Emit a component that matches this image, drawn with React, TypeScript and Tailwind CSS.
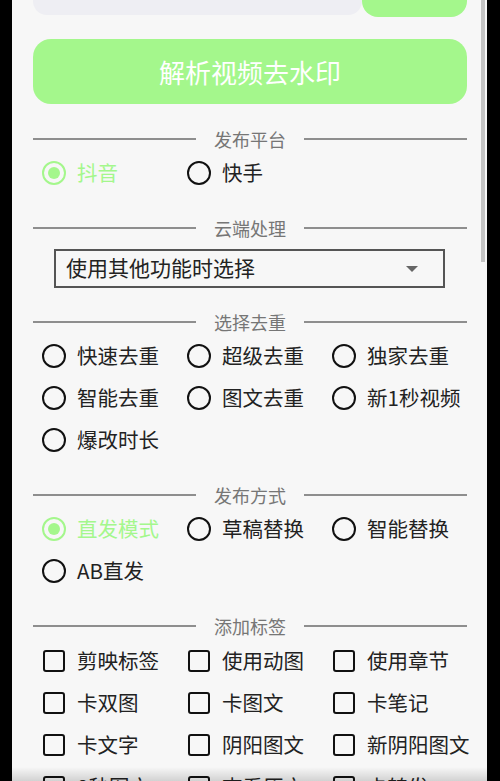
const font = { fontFamily: '"Noto Sans CJK SC", "Noto Sans", sans-serif' };

const Divider = ({ title }: { title: string }) => (
  <div className="h-[24px] flex items-center gap-[18px]">
    <div className="flex-1 h-[2px] bg-[#8e8e8e]" />
    <span className="text-[18px] leading-none text-[#767676]">{title}</span>
    <div className="flex-1 h-[2px] bg-[#8e8e8e]" />
  </div>
);

const Radio = ({ label, on }: { label: string; on?: boolean }) => (
  <div className="h-[42px] flex items-center gap-[11px]">
    {on ? (
      <div className="w-[24px] h-[24px] rounded-full border-[2.5px] border-[#a4f78c] flex items-center justify-center">
        <div className="w-[12px] h-[12px] rounded-full bg-[#a4f78c]" />
      </div>
    ) : (
      <div className="w-[24px] h-[24px] rounded-full border-[2.5px] border-[#111]" />
    )}
    <span className={"text-[20.5px] leading-none -mt-[2px] " + (on ? "text-[#a4f78c]" : "text-[#222]")}>{label}</span>
  </div>
);

const Check = ({ label }: { label: string }) => (
  <div className="h-[42px] flex items-center gap-[12px] pl-[1px]">
    <div className="w-[22px] h-[22px] rounded-[3px] border-[2.5px] border-[#111]" />
    <span className="text-[20.5px] leading-none -mt-[2px] text-[#222]">{label}</span>
  </div>
);

const cols = "grid grid-cols-[145px_145px_145px] pl-[9px]";

export default function App() {
  return (
    <div className="w-[500px] h-[781px] bg-black overflow-hidden" style={font}>
      <div className="relative ml-[12px] w-[475px] h-[781px] bg-[#f7f7f7] overflow-hidden">
        {/* scrollbar thumb */}
        <div className="absolute right-[2px] top-0 w-[4px] h-[262px] bg-[#c4c4c4]" />
        {/* bottom shadow */}
        <div className="absolute left-0 right-0 bottom-0 h-[14px] bg-gradient-to-b from-transparent to-black/15" />

        <div className="pl-[21px] pr-[20px]">
          <div className="h-[17px] flex items-end overflow-hidden">
            <div className="flex-1 h-[50px] mb-[2px] rounded-[14px] bg-[#eeeef3]" />
            <div className="w-[105px] h-[50px] rounded-[16px] bg-[#a4f78c]" />
          </div>

          <button className="mt-[22px] w-full h-[65px] rounded-[18px] bg-[#a4f78c] text-white text-[26px] flex items-center justify-center">
            解析视频去水印
          </button>

          <div className="mt-[23px]">
            <Divider title="发布平台" />
            <div className={cols + " mt-[1px]"}>
              <Radio label="抖音" on />
              <Radio label="快手" />
            </div>
          </div>

          <div className="mt-[22px]">
            <Divider title="云端处理" />
            <div className="mt-[9px] ml-[21px] w-[391px] h-[39px] border-2 border-[#555] flex items-center justify-between pl-[10px] pr-[24px]">
              <span className="text-[21px] leading-none -mt-[2px] text-[#222]">使用其他功能时选择</span>
              <svg width="14" height="8" viewBox="0 0 14 8">
                <path d="M1 1 L13 1 L7 7 Z" fill="#666" />
              </svg>
            </div>
          </div>

          <div className="mt-[22px]">
            <Divider title="选择去重" />
            <div className={cols + " mt-[1px]"}>
              {["快速去重", "超级去重", "独家去重", "智能去重", "图文去重", "新1秒视频", "爆改时长"].map((t) => (
                <Radio key={t} label={t} />
              ))}
            </div>
          </div>

          <div className="mt-[22px]">
            <Divider title="发布方式" />
            <div className={cols + " mt-[1px]"}>
              <Radio label="直发模式" on />
              <Radio label="草稿替换" />
              <Radio label="智能替换" />
              <Radio label="AB直发" />
            </div>
          </div>

          <div className="mt-[22px]">
            <Divider title="添加标签" />
            <div className={cols + " mt-[2px]"}>
              {[
                "剪映标签",
                "使用动图",
                "使用章节",
                "卡双图",
                "卡图文",
                "卡笔记",
                "卡文字",
                "阴阳图文",
                "新阴阳图文",
                "8秒图文",
                "查看原文",
                "卡转发",
              ].map((t) => (
                <Check key={t} label={t} />
              ))}
            </div>
          </div>
        </div>
      </div>
    </div>
  );
}
